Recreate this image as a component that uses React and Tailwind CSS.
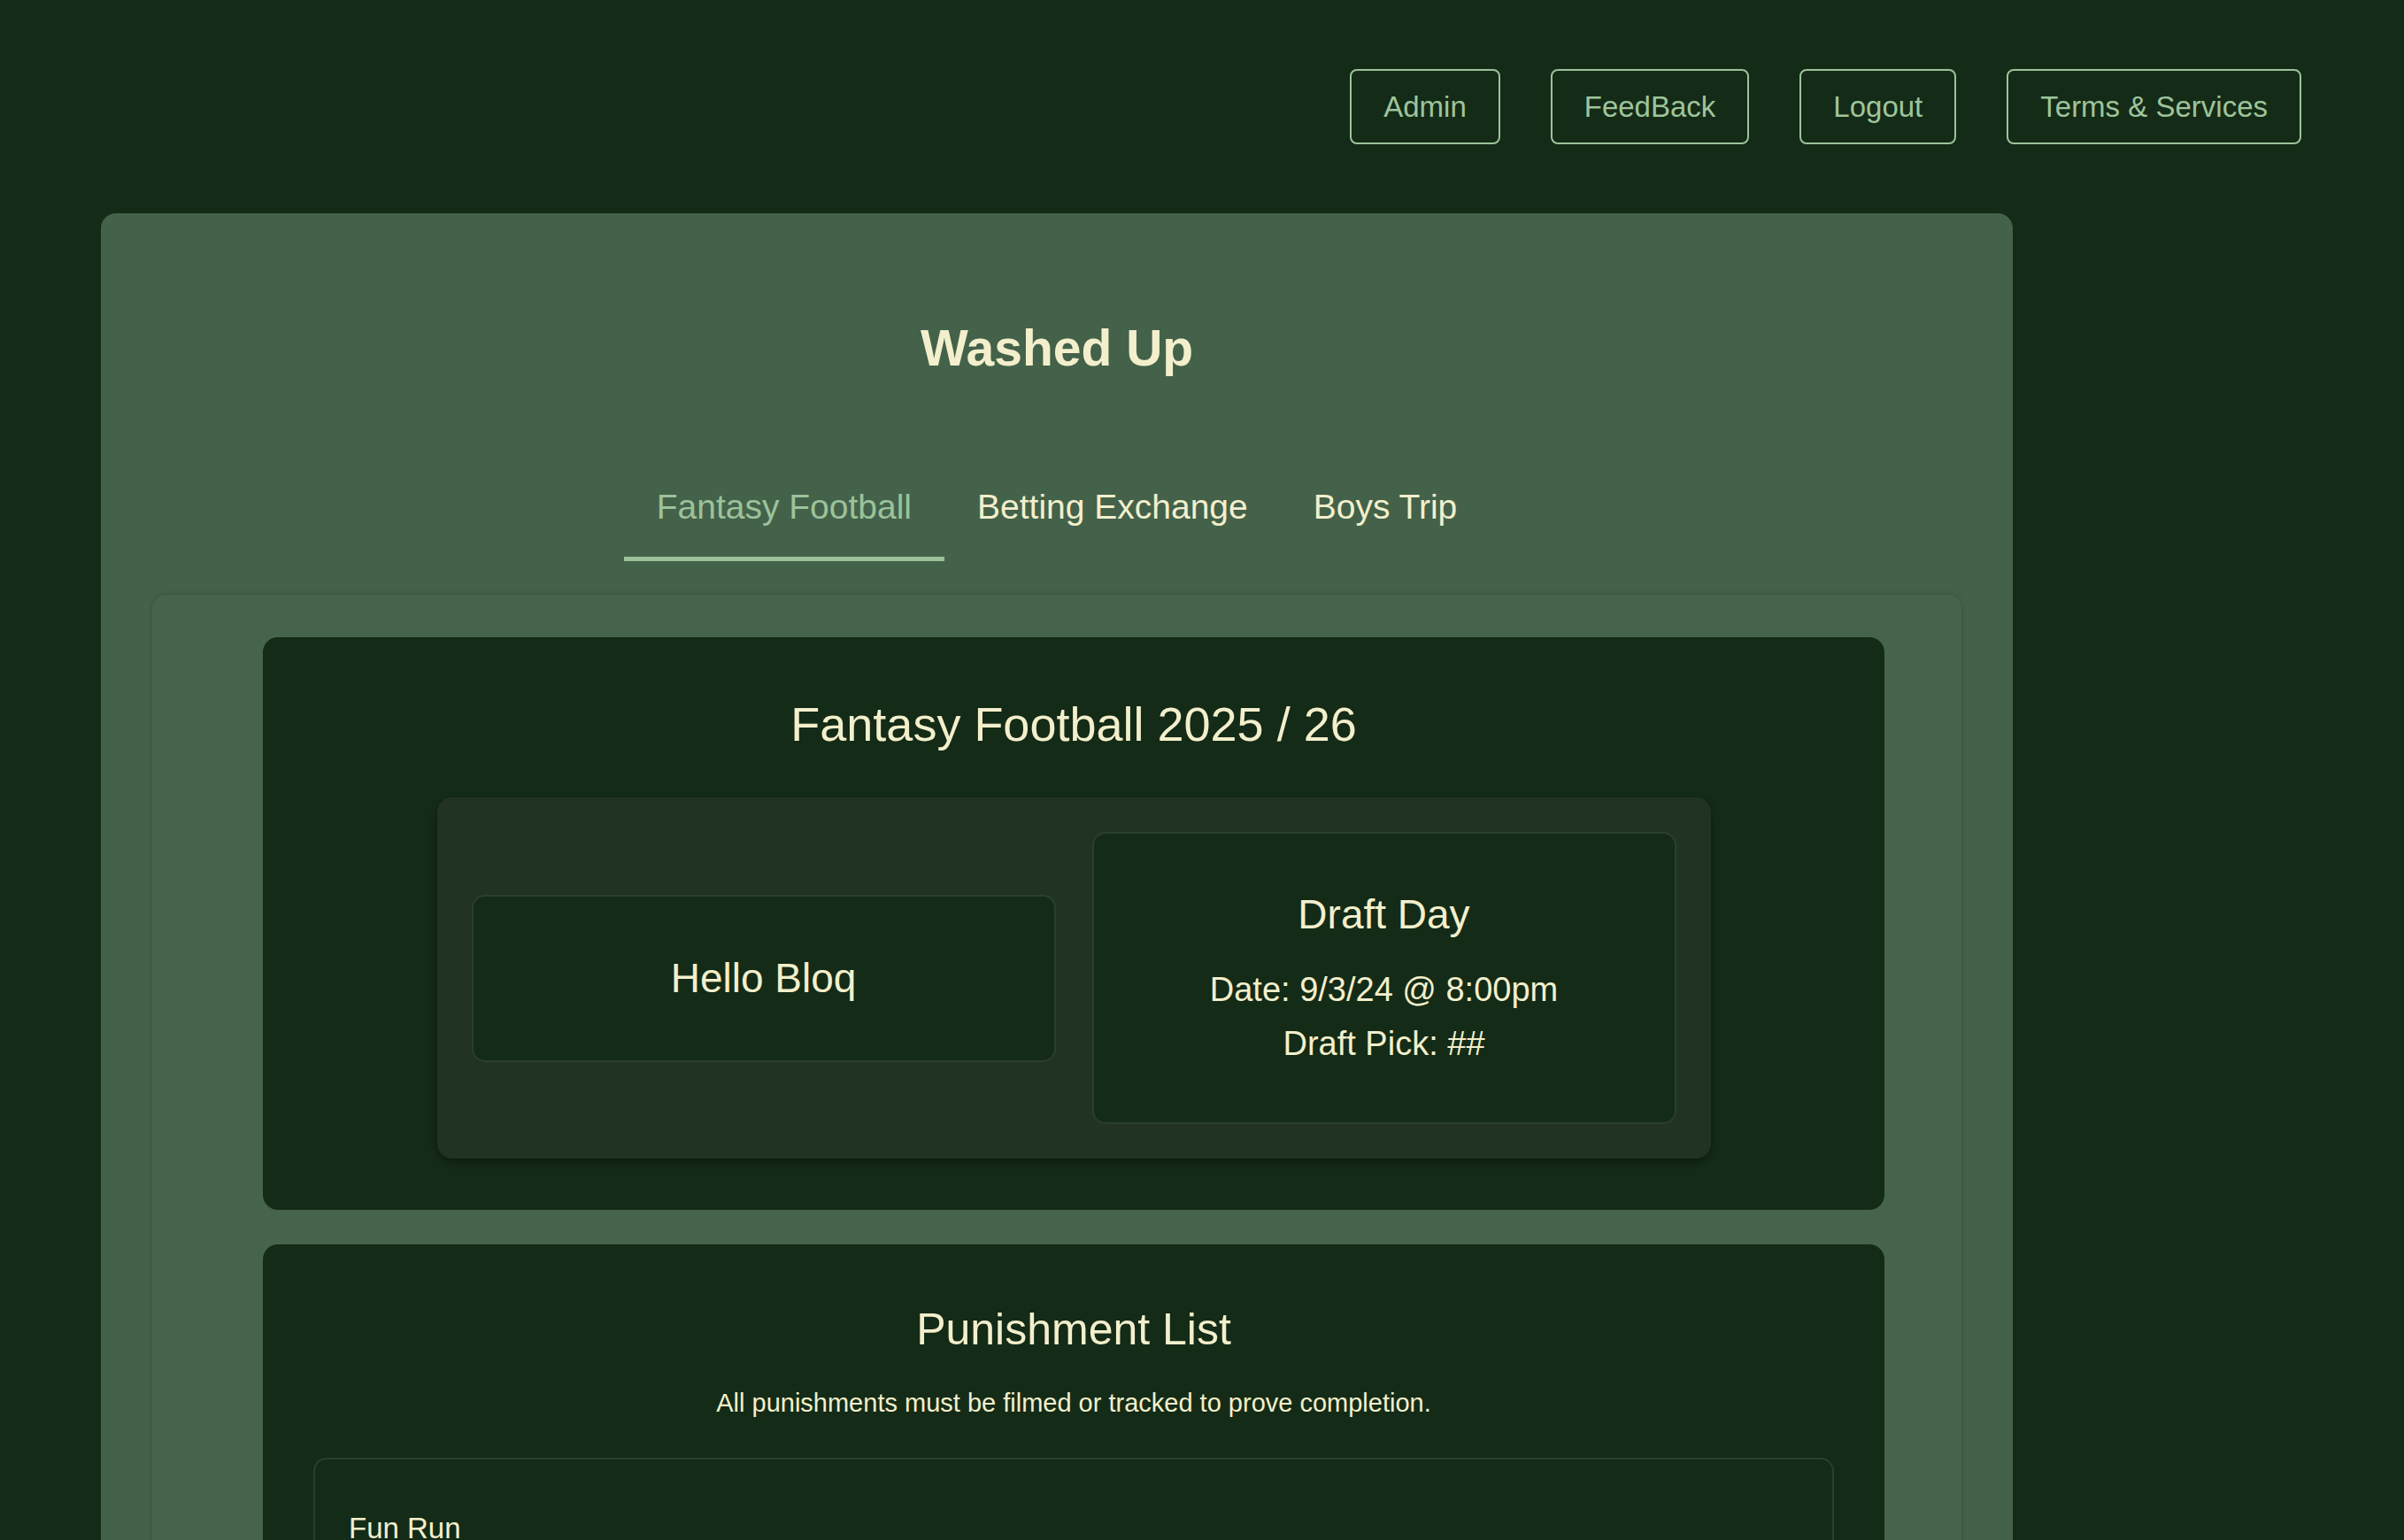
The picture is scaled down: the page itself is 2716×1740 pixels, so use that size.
import React, { useState } from 'react';

const navLinks = ['Admin', 'FeedBack', 'Logout', 'Terms & Services'];
const tabs = ['Fantasy Football', 'Betting Exchange', 'Boys Trip'];

const App = () => {
  const [activeTab, setActiveTab] = useState('Fantasy Football');

  return (
    <div
      className="h-[1740px] overflow-hidden bg-[#142b17]"
      style={{ fontFamily: '"Liberation Sans", Arial, sans-serif' }}
    >
      {/* top nav */}
      <div className="flex justify-end gap-[57px] pt-[78px] pr-[116px]">
        {navLinks.map(link => (
          <button
            key={link}
            className="h-[85px] px-[36px] flex items-center border-2 border-[#9cc39a] rounded-[8px] text-[33px] text-[#9fc49b] bg-transparent"
          >
            {link}
          </button>
        ))}
      </div>

      {/* main panel */}
      <div className="ml-[114px] w-[2160px] mt-[78px] bg-[#44624a] rounded-[17px] pb-[60px]">
        <h1 className="pt-[118px] text-center text-[57px] leading-[68px] font-bold text-[#f3efcc]">
          Washed Up
        </h1>

        <div className="flex justify-center mt-[103px]">
          {tabs.map(tab => (
            <button
              key={tab}
              onClick={() => setActiveTab(tab)}
              className={
                activeTab === tab
                  ? 'px-[37px] pt-[20px] pb-[33px] text-[39px] leading-[46px] text-[#9cc29a] border-b-[5px] border-[#9cc29a]'
                  : 'px-[37px] pt-[20px] pb-[33px] text-[39px] leading-[46px] text-[#f3efcc] border-b-[5px] border-transparent'
              }
            >
              {tab}
            </button>
          ))}
        </div>

        <div className="mt-[38px] mx-[58px] pt-[48px] pl-[125px] pr-[87px] pb-[80px] bg-[#46634b] rounded-[15px] shadow-[0_0_6px_rgba(0,0,0,0.18)]">
          {/* season card */}
          <div className="bg-[#142b17] rounded-[17px] pt-[66px] pb-[58px]">
            <h2 className="text-center text-[54px] leading-[65px] text-[#f3efcc]">
              Fantasy Football 2025 / 26
            </h2>
            <div className="mt-[50px] mx-auto w-[1439px] bg-[#213424] rounded-[17px] p-[39px] grid grid-cols-2 gap-[41px] items-center shadow-[0_4px_8px_rgba(0,0,0,0.35)]">
              <div className="border-2 border-[#2a3f2d] rounded-[15px] bg-[#142b17] py-[65px] text-center">
                <h3 className="text-[46px] leading-[55px] text-[#f3efcc]">Hello Bloq</h3>
              </div>
              <div className="border-2 border-[#2a3f2d] rounded-[15px] bg-[#142b17] pt-[64px] pb-[58px] text-center text-[#f3efcc]">
                <h3 className="text-[46px] leading-[55px] mb-[27px]">Draft Day</h3>
                <p className="text-[38px] leading-[61px]">Date: 9/3/24 @ 8:00pm</p>
                <p className="text-[38px] leading-[61px]">Draft Pick: ##</p>
              </div>
            </div>
          </div>

          {/* punishments */}
          <div className="mt-[39px] bg-[#142b17] rounded-[17px] pt-[66px] px-[57px] pb-[60px] text-[#f3efcc]">
            <h2 className="text-center text-[50px] leading-[60px]">Punishment List</h2>
            <p className="mt-[32px] text-center text-[29px] leading-[42px]">
              All punishments must be filmed or tracked to prove completion.
            </p>
            <div className="mt-[41px] border-2 border-[#2a3f2d] rounded-[15px] px-[38px] pt-[58px] pb-[60px]">
              <h4 className="text-[33px] leading-[40px]">Fun Run</h4>
            </div>
          </div>
        </div>
      </div>
    </div>
  );
};

export default App;
